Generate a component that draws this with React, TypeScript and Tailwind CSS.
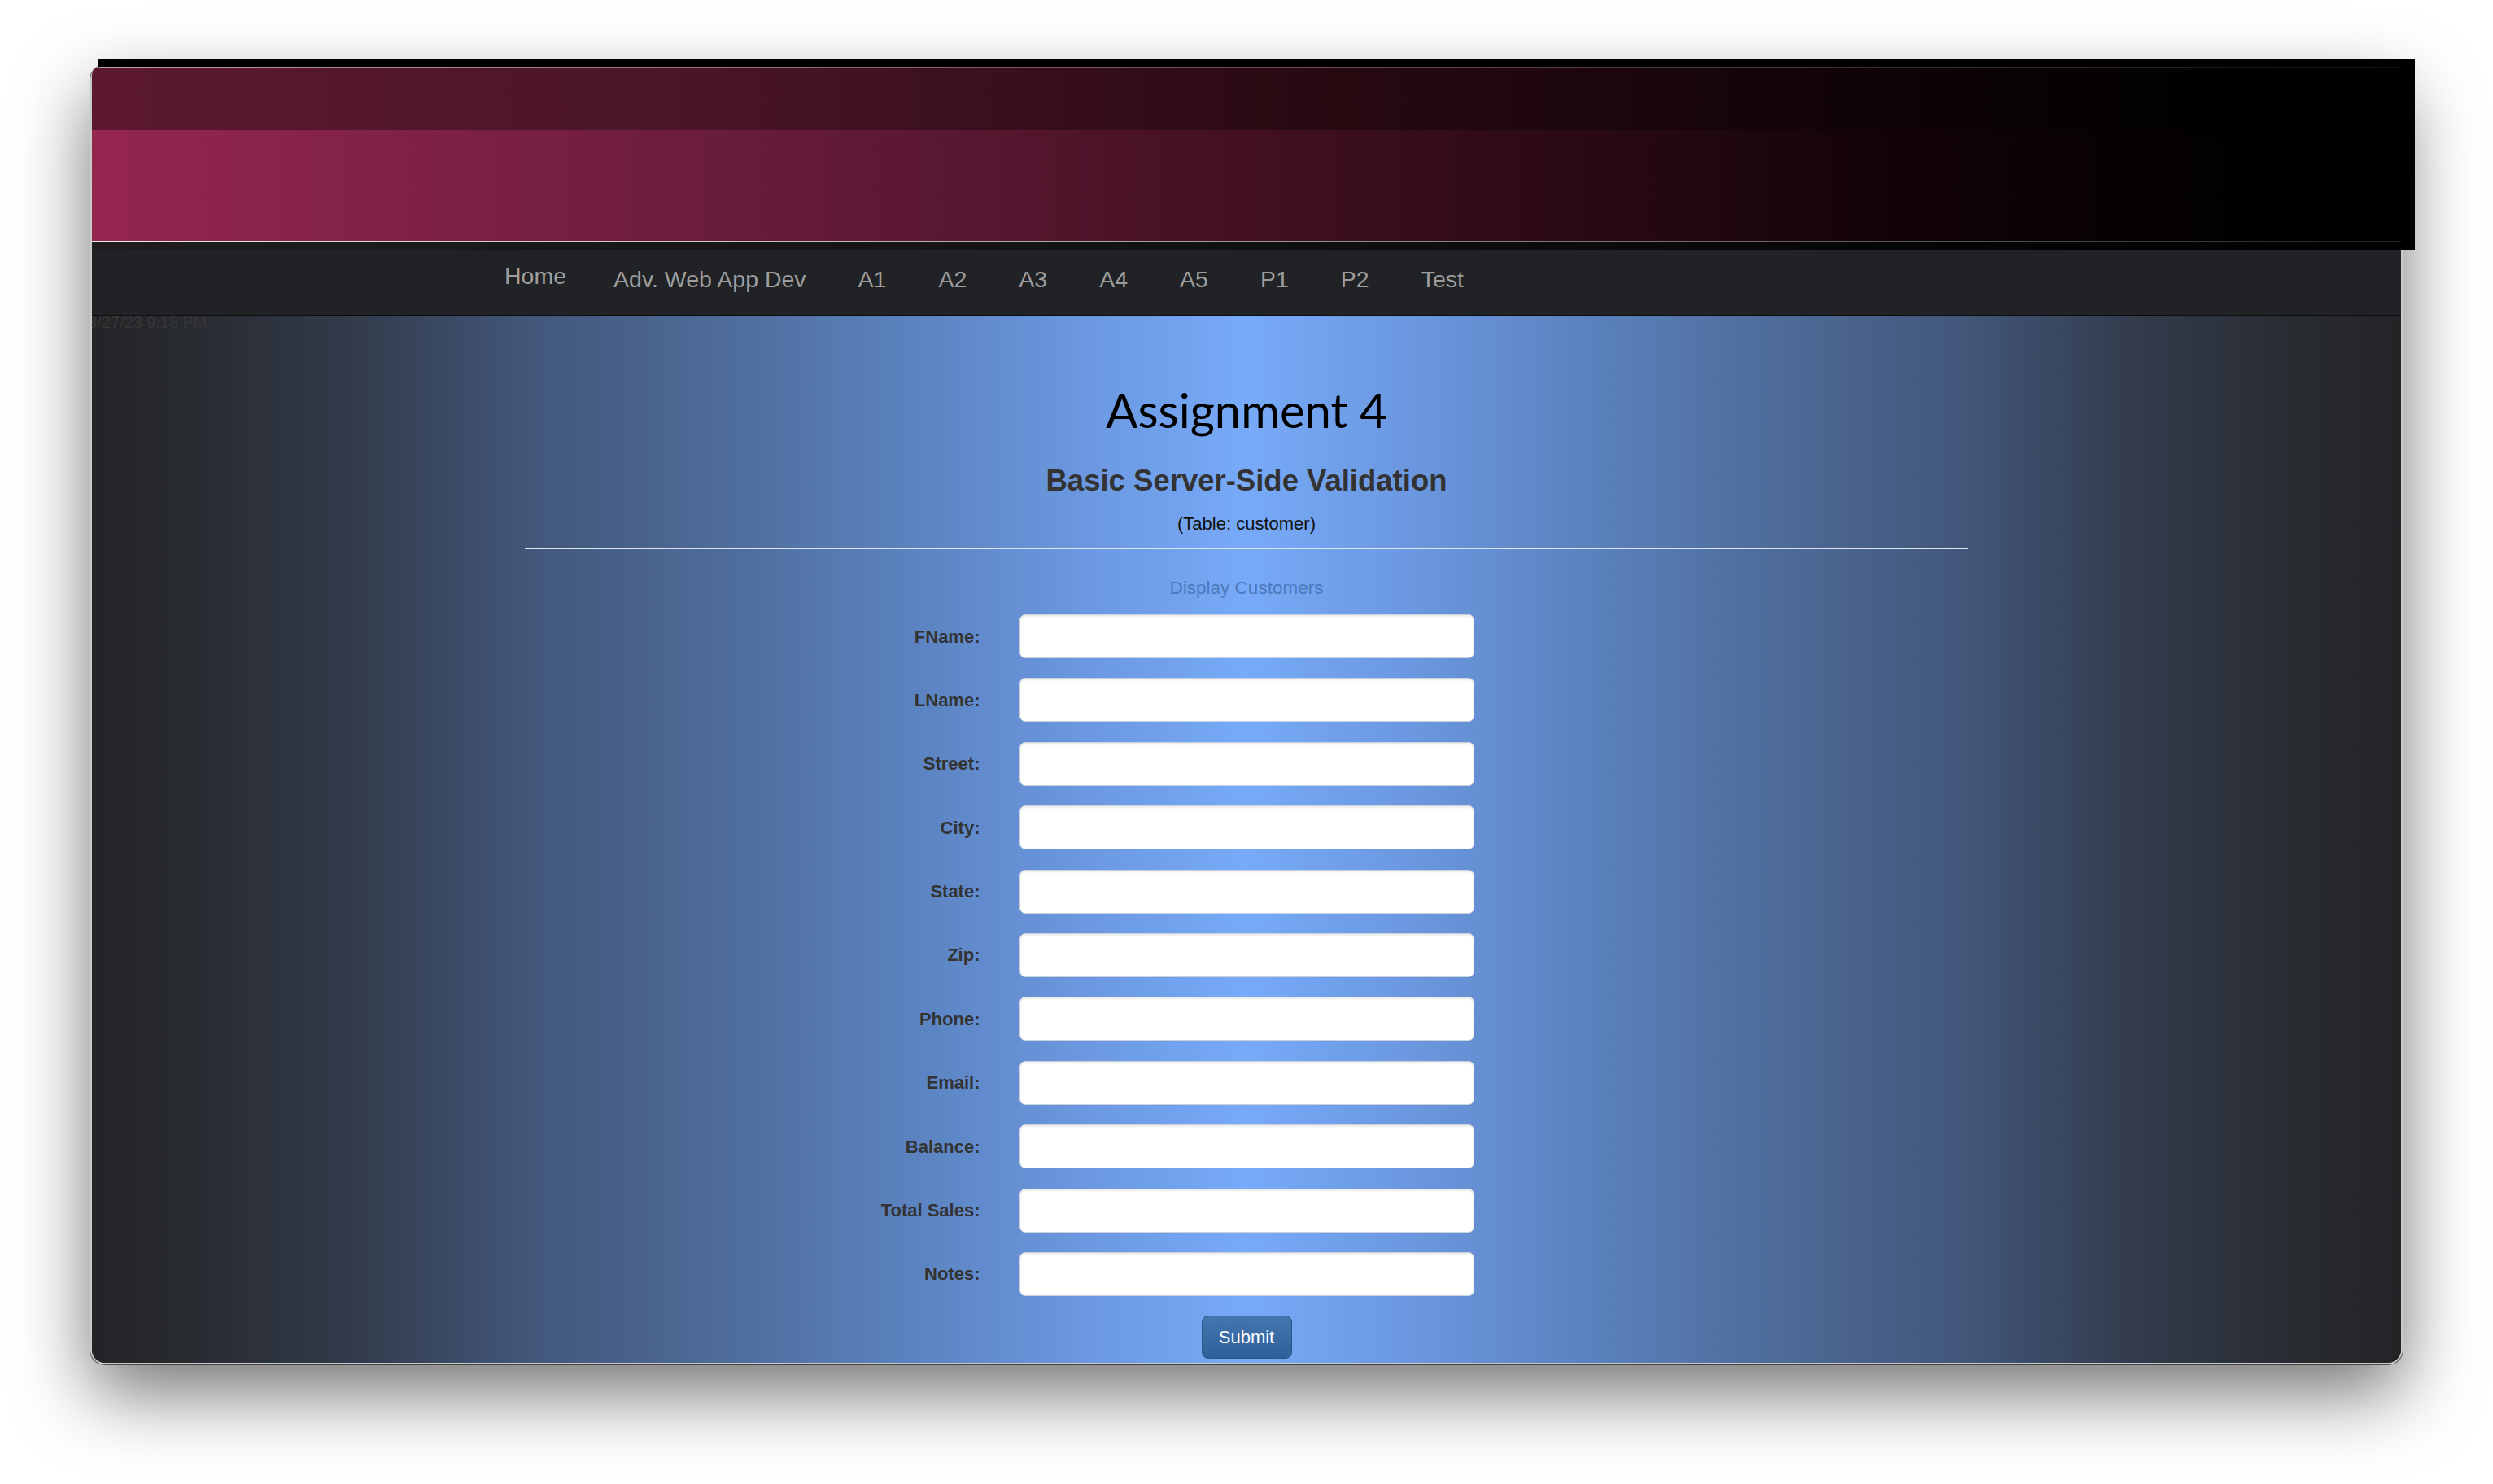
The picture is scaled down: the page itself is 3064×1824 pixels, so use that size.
import React from "react";

const navItems = ["Adv. Web App Dev", "A1", "A2", "A3", "A4", "A5", "P1", "P2", "Test"];
const fields = ["FName", "LName", "Street", "City", "State", "Zip", "Phone", "Email", "Balance", "Total Sales", "Notes"];

export default function App() {
  return (
    <div className="w-[3064px] h-[1824px] bg-white overflow-hidden pt-[80px] pl-[111px] [font-family:'Liberation_Sans',Arial,sans-serif]">
      <div className="relative w-[2842px] h-[1597px] rounded-[18px] border-2 border-[#c9c9c9] shadow-[0_0_0_1px_rgba(0,0,0,0.55),0_35px_90px_rgba(0,0,0,0.55)] flex flex-col bg-[#232426]">
        {/* overflowing black header backdrop */}
        <div className="absolute top-[-10px] left-[7px] w-[2848px] h-[235px] bg-black" />

        {/* header */}
        <div className="relative z-10 flex flex-col rounded-tl-[10px] overflow-hidden">
          <div className="h-[1px] bg-[linear-gradient(90deg,#b9a2ab_0%,#7a5a66_40%,#3a2a30_80%,#111_100%)]" />
          <div className="h-[77px] bg-[linear-gradient(90deg,#5c1831_0%,#4a1529_26%,#2a0a12_52%,#0e0306_78%,#000_92%)]" />
          <div className="h-[136px] bg-[linear-gradient(90deg,#95264f_0%,#6c1d3d_26%,#3f0f20_52%,#130309_78%,#000_94%)]" />
          <div className="h-[2px] bg-[linear-gradient(90deg,#ececec_0%,#b0b0b0_40%,#555_80%,#222_100%)]" />
          <div className="h-[9px] bg-[linear-gradient(90deg,#1e1e1e_0%,#141414_40%,#050505_80%,#000_100%)]" />
        </div>

        {/* nav */}
        <div className="relative z-10 h-[81px] pb-[8px] bg-[#202225] border-b border-[#0e0f10] flex items-center pl-[507px] text-[28.5px] text-[#9d9d9d]">
          <span className="pr-[26px] mb-[7px]">Home</span>
          {navItems.map((n) => (
            <span key={n} className="px-[32px]">{n}</span>
          ))}
        </div>

        {/* content */}
        <div className="flex-1 overflow-hidden rounded-b-[16px] bg-[linear-gradient(90deg,#232426_0%,#292c32_5%,#333d4f_12%,#42577a_19%,#4c6894_26%,#5c84c2_36%,#6b98e0_43%,#77aaf8_50%,#6b98e0_57%,#5c84c2_64%,#4c6894_74%,#42577a_81%,#333d4f_88%,#292c32_95%,#232426_100%)] flex flex-col items-center">
          <div className="self-start -ml-[5px] -mt-[3px] text-[20px] leading-[22px] text-[#363636]">3/27/23 9:18 PM</div>

          <h1 className="mt-[68px] text-[58px] leading-none text-black [font-family:Lato,'Open_Sans',sans-serif]">Assignment 4</h1>
          <h3 className="mt-[40px] text-[36.5px] leading-none font-bold text-[#333]">Basic Server-Side Validation</h3>
          <p className="mt-[23px] text-[22px] leading-none text-[#111]">(Table: customer)</p>

          <div className="mt-[18px] w-[1774px] h-[2px] bg-[#dbe4f0]" />

          <p className="mt-[37px] text-[22.5px] leading-none text-[#4b79bc]">Display Customers</p>

          <div className="mt-[21px] flex flex-col items-center gap-[24.4px]">
            {fields.map((f) => (
              <div key={f} className="flex items-center gap-[48px]">
                <label className="w-[300px] text-right text-[22px] font-bold text-[#333]">{f}:</label>
                <div className="w-[559px] h-[54px] bg-white rounded-[7px] border border-[#c9d2de] shadow-[inset_0_2px_2px_rgba(0,0,0,0.08)]" />
                <div className="w-[300px]" />
              </div>
            ))}
            <button className="w-[111px] h-[53px] rounded-[8px] border border-[#2b5787] bg-[linear-gradient(180deg,#4376b0_0%,#30609a_100%)] text-white text-[22px]">
              Submit
            </button>
          </div>
        </div>
      </div>
    </div>
  );
}
